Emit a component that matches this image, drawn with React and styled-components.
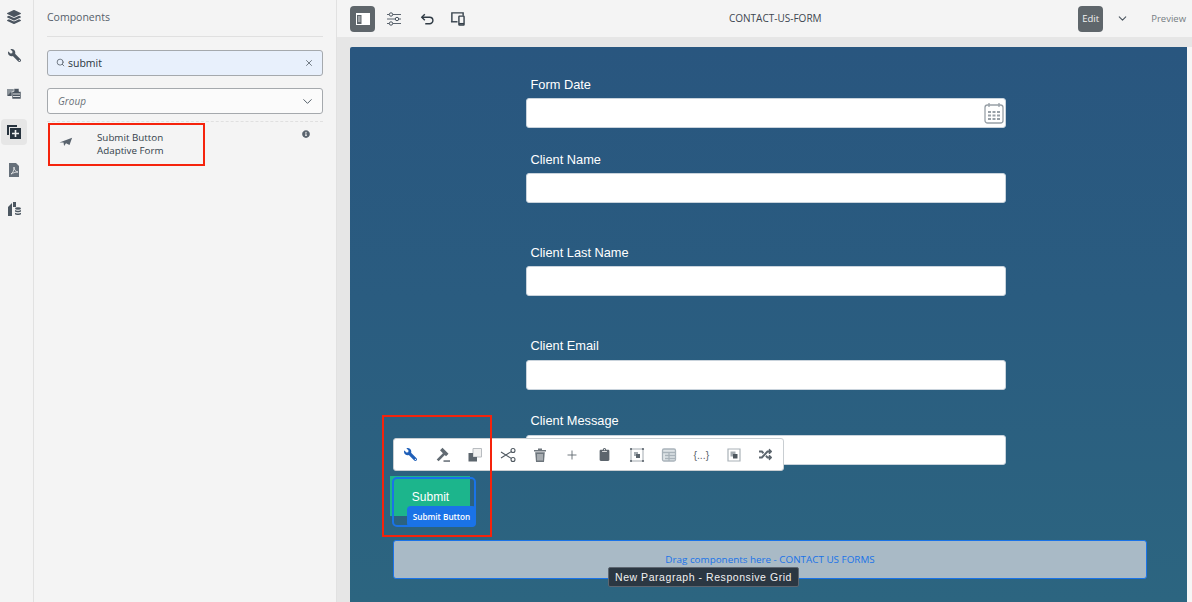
import React from "react";
import styled, { createGlobalStyle } from "styled-components";
import { FaLayerGroup, FaWrench, FaInfoCircle, FaRandom, FaClipboard } from "react-icons/fa";
import { ChevronDown, X, Plus, Search as SearchGlyph } from "lucide-react";

const Global = createGlobalStyle`
  html, body { margin: 0; padding: 0; width: 1192px; height: 602px; overflow: hidden; background: #f4f4f4; }
  *, *::before, *::after { box-sizing: border-box; }
  body { font-family: "Open Sans", "Liberation Sans", sans-serif; }
`;

const Page = styled.div`display: flex; width: 1192px; height: 602px; overflow: hidden;`;
const Rail = styled.nav`
  width: 34px; flex: none; border-right: 1px solid #e1e1e1; background: #f4f4f4;
  display: flex; flex-direction: column; align-items: flex-start; padding-left: 1px;
`;
const RailBtn = styled.div`
  width: 26px; height: 26px; margin-top: ${p => p.$mt}px; flex: none; border-radius: 4px;
  display: flex; align-items: center; justify-content: center; color: #4b5560;
  background: ${p => (p.$active ? "#e6e6e6" : "transparent")};
`;
const Panel = styled.aside`
  width: 303px; flex: none; background: #f4f4f4; border-right: 1px solid #e1e1e1;
  padding: 0 13px; display: flex; flex-direction: column; position: relative;
`;
const PanelTitle = styled.div`
  height: 37px; margin-bottom: 13px; border-bottom: 1px solid #e0e0e0; font-size: 10.5px; line-height: 34px; color: #55606a;
`;
const Search = styled.div`
  height: 26px; border: 1px solid #a5a9ad; border-radius: 3px; background: #e8f0fc;
  display: flex; align-items: center; padding: 0 8px 1px; gap: 3px; font-size: 10.5px; color: #2c3540;
  span { flex: 1; }
`;
const Select = styled.div`
  height: 26px; margin-top: 12px; border: 1px solid #a5a9ad; border-radius: 3px; background: #fbfbfb;
  display: flex; align-items: center; justify-content: space-between; padding: 0 7px 0 10px;
  font-size: 10px; font-style: italic; color: #6a7178;
`;
const ResultList = styled.div`
  margin-top: 7px; border-top: 1px dashed #e0e0e0; display: flex; justify-content: space-between; height: 44px;
  padding: 3px 0 0 0; position: relative;
`;
const Result = styled.div`
  display: flex; width: 157px; height: 44px; margin-left: 1px; padding: 6px 0 0 11px; align-items: flex-start;
  color: #33404a; font-size: 9.8px; line-height: 13px; gap: 24px;
`;
const IconCell = styled.span`width: 14px; padding-top: 4px; color: #5a646e; display: flex;`;
const Info = styled.span`margin: 5px 13px 0 0; color: #5a646e; display: flex;`;
const Highlight = styled.div`
  position: absolute; border: 2px solid #f5230c; pointer-events: none;
  left: ${p => p.$l}px; top: ${p => p.$t}px; width: ${p => p.$w}px; height: ${p => p.$h}px;
`;
const Main = styled.main`flex: 1; display: flex; flex-direction: column; min-width: 0;`;
const Topbar = styled.header`
  height: 37px; flex: none; background: #f4f4f4; display: flex; align-items: center;
  padding: 0 6px 0 13px; position: relative;
`;
const ToolBtn = styled.div`
  width: 25px; height: 26px; border-radius: 4px; display: flex; align-items: center; justify-content: center;
  margin-right: ${p => p.$mr || 6}px; color: #36414b; background: ${p => (p.$active ? "#5f666b" : "transparent")};
`;
const PageTitle = styled.div`
  position: absolute; left: 392px; top: 11px; font-size: 10px; line-height: 14px; color: #3d4650;
`;
const RightTools = styled.div`margin-left: auto; display: flex; align-items: center;`;
const EditBtn = styled.div`
  width: 25px; height: 26px; background: #5f666b; color: #f2f2f2; border-radius: 4px; font-size: 9.5px;
  display: flex; align-items: center; justify-content: center;
`;
const ModeChevron = styled.span`display: flex; margin: 0 0 0 13px; color: #4c5660;`;
const PreviewBtn = styled.span`margin-left: 22px; font-size: 9.5px; color: #777d83;`;
const Workspace = styled.div`
  flex: 1; background: #e6e6e6; padding: 10px 5px 0 13px; display: flex; min-height: 0;
`;
const Canvas = styled.section`
  flex: 1; background: linear-gradient(180deg, #29567f 0%, #2a5c80 45%, #2c6580 100%);
  position: relative; padding: 30px 0 0 176px; overflow: hidden;
  border-radius: 2px 0 0 0; box-shadow: 5px 0 0 #f6f6f6;
`;
const Field = styled.div`width: 480px; margin-top: ${p => p.$mt || 0}px;`;
const Label = styled.label`
  display: block; height: 15px; margin: 0 0 ${p => p.$gap}px 4.5px; font: 12.8px/15px "Liberation Sans", Arial, sans-serif; color: #fff;
`;
const Input = styled.div`
  height: 30px; background: #fff; border-radius: 3px; border: 1px solid #c9d3dc; display: flex;
  justify-content: flex-end; align-items: center; padding-right: 1px; color: #8f989f;
`;
const SubmitZone = styled.div`
  margin: 11px 0 0 -136px; width: 80px; height: 40px; position: relative;
  &::after {
    content: ""; position: absolute; left: 2px; top: 1px; width: 84px; height: 50px;
    border: 2px solid #1a73e8; border-radius: 5px; pointer-events: none;
  }
`;
const Submit = styled.button`
  display: block; width: 80px; height: 40px; border: 0; background: #1cb58c; color: #fff;
  font: 12px "Liberation Sans", Arial, sans-serif; padding: 1px 0 0 1px;
`;
const SubmitTag = styled.div`
  position: absolute; left: 17px; top: 30px; z-index: 1; width: 69px; height: 21px; background: #1a73e8; color: #fff;
  border-radius: 4px; font-size: 8.2px; font-weight: 600; display: flex; align-items: center; justify-content: center;
`;
const DropZone = styled.div`
  margin: 24px 0 0 -133px; width: 754px; height: 39px; background: #a9bac6; border: 1px solid #1a73e8;
  border-radius: 3px; color: #1a73e8; font-size: 9.85px; display: flex; align-items: center; justify-content: center; padding-bottom: 2px;
`;
const FloatBar = styled.div`
  position: absolute; left: 43px; top: 391px; width: 391px; height: 33px; background: #fff; border-radius: 3px;
  border: 1px solid #c9ced2; display: flex; align-items: center; padding: 0 0 0 0.5px;
`;
const FloatBtn = styled.span`
  width: 32.3px; height: 20px; display: flex; align-items: center; justify-content: center; flex: none;
  color: ${p => p.$c || "#5c656d"};
`;
const Tip = styled.div`
  position: absolute; left: 258px; top: 520px; width: 191px; height: 20px; background: #2b3742; color: #f2f2f2;
  border: 1px solid #5d6670; border-radius: 2px; font: 10.5px/18px "Liberation Sans", Arial, sans-serif;
  letter-spacing: 0.55px; padding-left: 6px; white-space: nowrap;
`;
const BracesGlyph = styled.span`font: 10.5px "Liberation Sans", Arial, sans-serif; color: #5c656d; white-space: nowrap;`;
const Flip = styled.span`display: flex; transform: scaleX(-1);`;

const Svg = ({ s = 16, children, ...r }) => (
  <svg width={s} height={s} viewBox="0 0 16 16" {...r}>{children}</svg>
);
const AssetsIcon = () => (
  <Svg>
    <path d="M1 3h9v7H1z" fill="#8b939a" />
    <path d="M2 9l3-3 2 2 1-1 2 2v1H2z" fill="#4b5560" />
    <path d="M8 2.5h5v3h2V13H6V5.5h2z" fill="#4b5560" stroke="#f4f4f4" strokeWidth=".6" />
    <path d="M7 8h7M7 10.5h7" stroke="#f0f0f0" strokeWidth=".9" />
  </Svg>
);
const ComponentsIcon = () => (
  <Svg fill="#27333e"><path d="M1 1h10v2H3v8H1z" /><path d="M4 4h11v11H4z" /><path d="M8.7 6h1.6v2.7H13v1.6h-2.7V13H8.7v-2.7H6V8.7h2.7z" fill="#f0f0f0" /></Svg>
);
const PdfIcon = () => (
  <Svg fill="#66707a"><path d="M3 1h7l3 3v11H3z" /><path d="M5 12c2-1 3-4 3-7 0 3 2 5 4 5-3 0-5 1-7 2z" fill="none" stroke="#f0f0f0" strokeWidth=".8" /></Svg>
);
const DataIcon = () => (
  <Svg fill="#4d5862"><path d="M2 6l4-4v13H2z" /><path d="M7 1h3v5H7z" /><ellipse cx="12" cy="7.5" rx="3" ry="1.3" /><path d="M9 9c1 1 5 1 6 0v1.5c-1 1-5 1-6 0zM9 11.7c1 1 5 1 6 0v1.5c-1 1-5 1-6 0z" /></Svg>
);
const PlaneIcon = () => (
  <Svg s={14} fill="currentColor"><path d="M0.5 8.5L15 3l-3 8.5-4-2.2-2.2 3.4-.6-4.2z" /></Svg>
);
const PanelIcon = () => (
  <Svg><path d="M1 2h14v12H1z" fill="#fff" /><path d="M2 4h4.5v9H2z" fill="#5f666b" /><path d="M3 6h2.5M3 8h2.5M3 10h2.5" stroke="#fff" strokeWidth=".8" /></Svg>
);
const SlidersIcon = () => (
  <Svg s={16} fill="#f4f4f4" stroke="#4b5560" strokeWidth="1">
    <path d="M1 3.5h14M1 8h14M1 12.5h14" strokeWidth=".9" />
    <circle cx="5" cy="3.5" r="1.7" /><circle cx="11" cy="8" r="1.7" /><circle cx="5" cy="12.5" r="1.7" />
  </Svg>
);
const UndoIcon = () => (
  <Svg s={14} fill="none" stroke="#2f3a44" strokeWidth="1.6">
    <path d="M5.5 2.5L2 6l3.5 3.5" /><path d="M2.5 6H11a3.5 3.5 0 0 1 0 7.5H6" />
  </Svg>
);
const DevicesIcon = () => (
  <Svg s={15} fill="none" stroke="#36414b" strokeWidth="1.5">
    <path d="M2 11V2h12v3" /><path d="M1 11.5h7" /><rect x="9.5" y="5.5" width="5.5" height="9.5" rx=".5" fill="#f4f4f4" />
    <path d="M9.5 13.5h5.5" />
  </Svg>
);
const GavelIcon = () => (
  <Svg fill="#626b73">
    <path d="M7.5 0.8L13.5 6.8 11 9.3 9.8 8.1 3.6 14.3 1.7 12.4 7.9 6.2 5 3.3z" />
    <path d="M8.5 13.3h6.5v1.5H8.5z" />
  </Svg>
);
const CopyIcon = () => (
  <Svg><path d="M6 1.5h8.5V10H6z" fill="#f0f0f0" stroke="#b8bcc0" /><path d="M1.5 6H6v4h4v4.5H1.5z" fill="#5c656d" /></Svg>
);
const ScissorsIcon = () => (
  <Svg fill="none" stroke="#4f5860" strokeWidth="1.1">
    <circle cx="13" cy="3.5" r="2" /><circle cx="13" cy="12.5" r="2" />
    <path d="M11.3 4.6L1 11M11.3 11.4L1 5" />
  </Svg>
);
const TrashIcon = () => (
  <Svg fill="#6d757c">
    <path d="M2 3h12v1.5H2zM6 1.5h4V3H6z" />
    <path d="M3.2 5.3h9.6L12 15H4z" />
    <path d="M6 7v6.5M8 7v6.5M10 7v6.5" stroke="#fff" strokeWidth=".8" />
  </Svg>
);
const FrameIcon = () => (
  <Svg fill="none" stroke="#5c656d"><path d="M2 2h12v12H2z" stroke="#a3aab0" /><path d="M5 5h4v4H5z" fill="#a3aab0" stroke="none" /><path d="M7 7h4v4H7z" fill="#5c656d" stroke="none" /><g fill="#5c656d" stroke="none"><circle cx="2" cy="2" r="1.1" /><circle cx="14" cy="2" r="1.1" /><circle cx="2" cy="14" r="1.1" /><circle cx="14" cy="14" r="1.1" /></g></Svg>
);
const TableIcon = () => (
  <Svg fill="none" stroke="#a9b3ba" strokeWidth="1.3"><rect x="1.5" y="2" width="13" height="12" rx="1.5" fill="#dfe4e7" /><path d="M1.5 5.5h13M4 8.5h10M4 11.5h10M8 6v8" /></Svg>
);
const FrameIcon2 = () => (
  <Svg fill="none" stroke="#aab2b8" strokeWidth="1.2"><path d="M2 2h12v12H2z" /><path d="M4.5 4.5h5v5h-5z" fill="#a3aab0" stroke="none" /><path d="M7 7h4.5v4.5H7z" fill="#4e575f" stroke="none" /></Svg>
);
const CalendarIcon = () => (
  <svg width="20" height="22" viewBox="0 0 20 22" fill="none" stroke="#98a0a7" strokeWidth="1.3">
    <rect x="1" y="3" width="18" height="18" rx="2.5" />
    <path d="M5 1v4M15 1v4" />
    <path d="M4 10h3M8.5 10h3M13 10h3M4 13.5h3M8.5 13.5h3M13 13.5h3M4 17h3M8.5 17h3M13 17h3" strokeWidth="1.8" />
  </svg>
);

const fields = [
  { label: "Form Date", icon: true, mt: 0, gap: 6 },
  { label: "Client Name", mt: 24, gap: 6 },
  { label: "Client Last Name", mt: 42, gap: 6 },
  { label: "Client Email", mt: 42, gap: 7 },
  { label: "Client Message", mt: 23, gap: 7 },
];

export default function App() {
  return (
    <Page>
      <Global />
      <Rail>
        <RailBtn $mt={4}><FaLayerGroup size={14} /></RailBtn>
        <RailBtn $mt={12}><Flip><FaWrench size={13} /></Flip></RailBtn>
        <RailBtn $mt={13}><AssetsIcon /></RailBtn>
        <RailBtn $mt={12} $active><ComponentsIcon /></RailBtn>
        <RailBtn $mt={12}><PdfIcon /></RailBtn>
        <RailBtn $mt={13}><DataIcon /></RailBtn>
      </Rail>
      <Panel>
        <PanelTitle>Components</PanelTitle>
        <Search>
          <SearchGlyph size={9} color="#4c5660" strokeWidth={2} />
          <span>submit</span>
          <X size={10} color="#5c656d" />
        </Search>
        <Select>Group<ChevronDown size={15} color="#55606a" strokeWidth={1.6} /></Select>
        <ResultList>
          <Result>
            <IconCell><PlaneIcon /></IconCell>
            <div>Submit Button<br />Adaptive Form</div>
          </Result>
          <Info><FaInfoCircle size={8} /></Info>
          <Highlight $l={1} $t={1} $w={157} $h={43} />
        </ResultList>
      </Panel>
      <Main>
        <Topbar>
          <ToolBtn $active><PanelIcon /></ToolBtn>
          <ToolBtn $mr={8}><SlidersIcon /></ToolBtn>
          <ToolBtn><UndoIcon /></ToolBtn>
          <ToolBtn><DevicesIcon /></ToolBtn>
          <PageTitle>CONTACT-US-FORM</PageTitle>
          <RightTools>
            <EditBtn>Edit</EditBtn>
            <ModeChevron><ChevronDown size={13} /></ModeChevron>
            <PreviewBtn>Preview</PreviewBtn>
          </RightTools>
        </Topbar>
        <Workspace>
          <Canvas>
            {fields.map(f => (
              <Field key={f.label} $mt={f.mt}>
                <Label $gap={f.gap}>{f.label}</Label>
                <Input>{f.icon && <CalendarIcon />}</Input>
              </Field>
            ))}
            <SubmitZone>
              <Submit>Submit</Submit>
              <SubmitTag>Submit Button</SubmitTag>
            </SubmitZone>
            <DropZone>Drag components here - CONTACT US FORMS</DropZone>
            <FloatBar>
              <FloatBtn $c="#1f5fb8"><Flip><FaWrench size={13} /></Flip></FloatBtn>
              <FloatBtn><GavelIcon /></FloatBtn>
              <FloatBtn><CopyIcon /></FloatBtn>
              <FloatBtn><ScissorsIcon /></FloatBtn>
              <FloatBtn><TrashIcon /></FloatBtn>
              <FloatBtn><Plus size={14} strokeWidth={1.5} /></FloatBtn>
              <FloatBtn><FaClipboard size={13} /></FloatBtn>
              <FloatBtn><FrameIcon /></FloatBtn>
              <FloatBtn><TableIcon /></FloatBtn>
              <FloatBtn><BracesGlyph>{"{...}"}</BracesGlyph></FloatBtn>
              <FloatBtn><FrameIcon2 /></FloatBtn>
              <FloatBtn><FaRandom size={13} /></FloatBtn>
            </FloatBar>
            <Highlight $l={32} $t={368} $w={110} $h={122} />
            <Tip>New Paragraph - Responsive Grid</Tip>
          </Canvas>
        </Workspace>
      </Main>
    </Page>
  );
}
